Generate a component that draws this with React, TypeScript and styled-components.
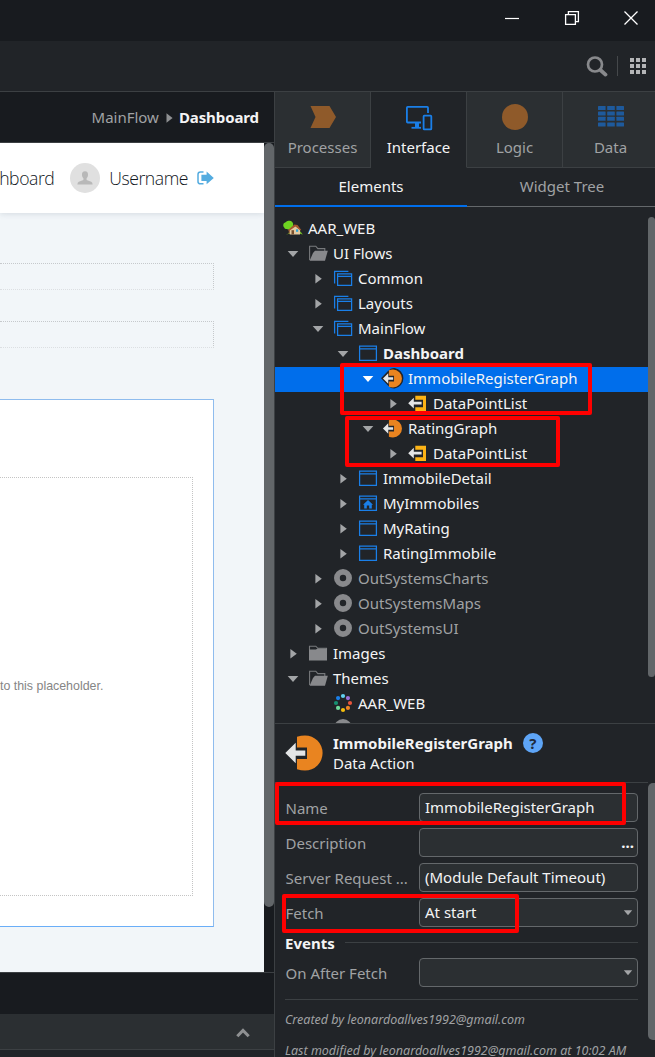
import React from "react";
import styled, { createGlobalStyle, css } from "styled-components";

const c = {
  title: "#181b1f",
  panel: "#212428",
  raised: "#2b2f32",
  line: "#3c4043",
  edge: "#64686b",
  text: "#f4f4f5",
  muted: "#a0a2a4",
  blue: "#006eeb",
  icon: "#1a7fe8",
  grey: "#88898c",
  orange: "#e98420",
  brown: "#8f5a2a",
  thumb: "#626669",
};

const Global = createGlobalStyle`
  *, *::before, *::after { box-sizing: border-box; }
  body { margin: 0; background: ${c.panel}; overflow: hidden; }
`;

const Window = styled.div`
  position: relative;
  width: 655px;
  height: 1057px;
  overflow: hidden;
  display: flex;
  flex-direction: column;
  background: ${c.panel};
  color: ${c.text};
  font: 15px/25px "Noto Sans", sans-serif;
  white-space: nowrap;
  svg { flex: none; }
`;

const TitleBar = styled.header`
  height: 41px;
  flex: none;
  background: ${c.title};
  display: flex;
  justify-content: flex-end;
  align-items: flex-start;
  gap: 43px;
  padding: 10px 16px 0 0;
`;

const Toolbar = styled.div`
  height: 51px;
  flex: none;
  border-bottom: 1px solid ${c.line};
  display: flex;
  justify-content: flex-end;
  align-items: center;
  padding-right: 9px;
`;

const Divider = styled.span`
  width: 1px;
  height: 20px;
  background: #45484b;
  margin: 0 12px 0 9px;
`;

const Body = styled.div`
  flex: 1;
  min-height: 0;
  display: flex;
`;

const Editor = styled.main`
  width: 275px;
  flex: none;
  border-right: 1px solid ${c.line};
  display: flex;
  flex-direction: column;
  background: ${c.title};
`;

const Breadcrumb = styled.nav`
  height: 51px;
  flex: none;
  border-bottom: 1px solid ${c.line};
  display: flex;
  align-items: center;
  justify-content: flex-end;
  padding: 1px 15px 0 0;
  color: ${c.muted};
  svg { margin: 1px 6px 0 7px; }
  b { color: ${c.text}; letter-spacing: -0.1px; }
`;

const Canvas = styled.div`
  height: 829px;
  flex: none;
  display: flex;
`;

const Preview = styled.div`
  width: 264px;
  overflow: hidden;
  background: #f2f6f9;
`;

const SiteBar = styled.div`
  height: 70px;
  background: #fff;
  box-shadow: 0 1px 6px rgba(60, 80, 100, 0.16);
  display: flex;
  align-items: center;
  justify-content: flex-end;
  padding-right: 50px;
  font: 300 17.6px/24px "Open Sans", sans-serif;
  letter-spacing: -0.45px;
  color: #10161c;
`;

const Avatar = styled.span`
  width: 30px;
  height: 30px;
  flex: none;
  border-radius: 50%;
  background: #e0e0e0;
  margin: 0 9px 0 16px;
  display: grid;
  place-items: center;
`;

const User = styled.span`
  margin-right: 9px;
`;

const Slot = styled.div`
  width: 214px;
  height: 27px;
  border: 1px dotted #c6c9cc;
  border-bottom-color: #dcdfe2;
  border-left: 0;
  margin-top: 50px;
  & + & { margin-top: 31px; }
`;

const Card = styled.div`
  width: 214px;
  height: 528px;
  margin-top: 51px;
  border: 1px solid #8fbcee;
  border-bottom-color: #6aaef8;
  border-left: 0;
  background: #fff;
  padding: 77px 20px 0 0;
`;

const Placeholder = styled.div`
  height: 419px;
  border: 1px dotted #c4c4c4;
  border-left: 0;
  display: flex;
  align-items: center;
  padding-bottom: 1px;
  font: 12.4px/16px "Liberation Sans", Arial, sans-serif;
  color: #858585;
`;

const Track = styled.div`
  width: 10px;
  background: ${c.title};
`;

const Thumb = styled.div<{ $h: number; $wide?: boolean }>`
  height: ${(p) => p.$h}px;
  width: ${(p) => (p.$wide ? 12 : 10)}px;
  border-radius: 5px;
  background: ${c.thumb};
`;

const Gap = styled.div`
  height: 42px;
  flex: none;
  border-top: 1px solid ${c.line};
`;

const Drawer = styled.div`
  height: 36px;
  flex: none;
  background: ${c.raised};
  border-bottom: 1px solid ${c.line};
  display: flex;
  justify-content: flex-end;
  padding: 14px 24px 0 0;
`;

const DrawerFoot = styled.div`
  flex: 1;
  background: ${c.panel};
`;

const Side = styled.aside`
  width: 380px;
  display: flex;
  flex-direction: column;
  overflow: hidden;
`;

const Layers = styled.div`
  flex: none;
  display: grid;
  grid-template-columns: repeat(4, 96px);
  height: 76px;
`;

const Layer = styled.div<{ $on?: boolean }>`
  border-right: 1px solid ${c.line};
  border-bottom: 1px solid ${(p) => (p.$on ? c.panel : c.line)};
  background: ${(p) => (p.$on ? c.panel : c.raised)};
  color: ${(p) => (p.$on ? c.text : c.muted)};
  display: flex;
  flex-direction: column;
  align-items: center;
  padding-top: 11px;
  svg { margin-bottom: 3px; }
`;

const SubTabs = styled.div`
  flex: none;
  display: grid;
  grid-template-columns: repeat(2, 192px);
  height: 39px;
`;

const SubTab = styled.div<{ $on?: boolean }>`
  text-align: center;
  padding-top: 6px;
  color: ${(p) => (p.$on ? c.text : c.muted)};
  ${(p) =>
    p.$on
      ? css`border-bottom: 2px solid ${c.blue};`
      : css`border-bottom: 1px solid ${c.edge}; padding-right: 2px;`}
`;

const TreePane = styled.section`
  flex: none;
  height: 516px;
  padding-top: 10px;
  display: flex;
  overflow: hidden;
`;

const Tree = styled.div`
  width: 373px;
  flex: none;
`;

const Row = styled.div<{ $level: number; $selected?: boolean; $bold?: boolean; $dim?: boolean }>`
  height: 25px;
  display: flex;
  padding-left: ${(p) => (p.$level ? p.$level * 25 - 15 : 9)}px;
  background: ${(p) => (p.$selected ? c.blue : "transparent")};
  font-weight: ${(p) => (p.$bold ? 700 : 400)};
  line-height: 23px;
  color: ${(p) => (p.$dim ? c.muted : c.text)};
`;

const RowIcon = styled.svg`
  width: 24px;
  height: 25px;
  overflow: visible;
`;

const Twisty = styled.svg`
  width: 16px;
  height: 25px;
  margin-right: 8px;
`;

const Head = styled.section`
  height: 59px;
  flex: none;
  border-top: 1px solid ${c.line};
  display: flex;
  padding: 10px 0 0 10px;
  line-height: 20px;
`;

const HeadText = styled.div`
  margin: -1px 0 0 10px;
`;

const HeadTitle = styled.div`
  display: flex;
  align-items: center;
  height: 20px;
  font-weight: 700;
`;

const Help = styled.span`
  width: 20px;
  height: 20px;
  border-radius: 50%;
  margin: 0 0 0 10px;
  background: #5ea5f7;
  color: #1e2a3a;
  text-align: center;
  line-height: 20px;
`;

const Props = styled.section`
  flex: 1;
  min-height: 0;
  display: flex;
`;

const Form = styled.div`
  width: 373px;
  flex: none;
  border-top: 1px solid ${c.line};
  padding: 10px 10px 0;
`;

const FormScroll = styled.div`
  padding-top: 1px;
`;

const Field = styled.div`
  display: flex;
  height: 29px;
  margin-bottom: 6px;
`;

const Label = styled.label`
  width: 134px;
  padding: 3px 0 0 0.5px;
  color: ${c.muted};
`;

const Input = styled.div`
  width: 219px;
  height: 29px;
  border: 1px solid ${c.edge};
  border-radius: 4px;
  background: ${c.raised};
  display: flex;
  align-items: center;
  justify-content: space-between;
  padding: 0 4px 0 5px;
  svg { margin-top: 1px; }
`;

const Dots = styled.b`
  margin-right: -1px;
`;

const Group = styled.div`
  display: flex;
  align-items: center;
  height: 25px;
  margin: -2px 0 2px;
  font-weight: 700;
  &::after {
    content: "";
    flex: 1;
    height: 1px;
    margin: 0 0 3px 10px;
    background: ${c.line};
  }
`;

const Meta = styled.div`
  margin-top: 12px;
  border-top: 1px solid ${c.line};
  padding-top: 4px;
  width: 353px;
  font-size: 12.5px;
  font-style: italic;
  line-height: 31px;
  color: ${c.muted};
`;

/* Callout frames that lie over the panels. */
const Mark = styled.div<{ $x: number; $y: number; $w: number; $h: number }>`
  position: absolute;
  left: ${(p) => p.$x}px;
  top: ${(p) => p.$y}px;
  width: ${(p) => p.$w}px;
  height: ${(p) => p.$h}px;
  border: 4px solid #fe0000;
  border-radius: 2px;
`;

type Kind = "home" | "open" | "folder" | "flow" | "screen" | "homeScreen" | "action" | "output" | "module" | "theme";

const ActionShape = () => (
  <>
    <path d="M12 1.8Q16 .4 20 .4A17.6 17.6 0 0 1 20 35.6Q16 35.6 12 34.2V24H22V12.5H12Z" fill={c.orange} />
    <path d="M.3 18 10.7 7.8V15.5H20.3V20.7H10.7V28.2Z" fill="#e4e5e6" />
  </>
);

const dots = ["#62d0f0", "#9b6fd8", "#e8553c", "#ee8424", "#f5bd0c", "#6fdc9c", "#168f70", "#1a7fe8"];

const icons: Record<Kind, React.ReactNode> = {
  home: (
    <>
      <path d="M5 12 4.5 17H6.5V12Z" fill="#8a5a2c" />
      <path d="M-.8 8Q-.8 5.6 1.6 5.2 3 3.2 5.6 3.8 8.6 4 9.2 7 9.6 10 7 11.6 5 13.4 3 12 .8 12.4 .2 10.4-.8 9.6-.8 8Z" fill="#6fd321" />
      <path d="M2 17.4Q8 14.5 18.8 17.4L16.5 14.5Z" fill="#76b82a" />
      <path d="M5.8 12 10.8 8.4 16 12.5V17.4H5.8Z" fill="#e3c9a0" />
      <path d="M4 13 10.4 7.4 13.5 8 17.3 13 16.4 13.6 11.5 9.4 5 13.9Z" fill="#a4582e" />
      <path d="M7.5 13.2H10V17.4H7.5Z" fill="#79502f" />
      <path d="M12 12.3H14.2V14.8H12Z" fill="#2fa5d8" />
    </>
  ),
  open: (
    <>
      <path d="M.6 18V4.2H6.8L8.8 6.6H15.8V9" fill="none" stroke="#77797c" strokeWidth="1.1" />
      <path d="M.6 18.7 4 11 6 8.8H18.8L16 18.7Z" fill={c.grey} />
    </>
  ),
  folder: (
    <>
      <path d="M.5 8V4.2H6.8L8.8 6.3H17.5V8" fill="none" stroke="#77797c" strokeWidth="1.1" />
      <path d="M0 18.5V7.6H7L8.6 6.4H18V18.5Z" fill={c.grey} />
    </>
  ),
  flow: (
    <g fill="none" stroke={c.icon} strokeWidth="1.25">
      <path d="M.6 16.6V4.3H14.4" />
      <path d="M3.6 6.8H17.6V18.3H3.6ZM3.6 9.4H17.6" />
    </g>
  ),
  screen: <path d="M.6 4H17.4V18.3H.6ZM.6 6.9H17.4" fill="none" stroke={c.icon} strokeWidth="1.25" />,
  homeScreen: (
    <>
      <path d="M.6 4H17.4V18.3H.6ZM.6 6.9H17.4" fill="none" stroke={c.icon} strokeWidth="1.25" />
      <path d="M9 8 14 12.7H12.8V16.6H10.2V13.6H7.8V16.6H5.2V12.7H4Z" fill={c.icon} />
    </>
  ),
  action: (
    <g transform="translate(-1.2 2.3) scale(.51)">
      <ActionShape />
    </g>
  ),
  output: (
    <>
      <path d="M6.3 3.8H17V19H6.3V15.2H14V7.8H6.3Z" fill="#fcb316" />
      <path d="M-.8 11.2 4.8 5.8V9.8H12.6V12.6H4.8V16.6Z" fill="#e4e5e6" />
    </>
  ),
  module: <circle cx="9" cy="11" r="6.1" fill="none" stroke={c.grey} strokeWidth="5.8" />,
  theme: (
    <>
      {dots.map((d, i) => (
        <circle key={d} cx={9 + 7 * Math.sin((i * Math.PI) / 4)} cy={11 - 7 * Math.cos((i * Math.PI) / 4)} r="2.1" fill={d} />
      ))}
    </>
  ),
};

type Item = { n: string; l: number; k: Kind; o?: boolean | null; sel?: boolean; bold?: boolean; dim?: boolean };

const items: Item[] = [
  { n: "AAR_WEB", l: 0, k: "home", o: null },
  { n: "UI Flows", l: 1, k: "open", o: true },
  { n: "Common", l: 2, k: "flow" },
  { n: "Layouts", l: 2, k: "flow" },
  { n: "MainFlow", l: 2, k: "flow", o: true },
  { n: "Dashboard", l: 3, k: "screen", o: true, bold: true },
  { n: "ImmobileRegisterGraph", l: 4, k: "action", o: true, sel: true },
  { n: "DataPointList", l: 5, k: "output" },
  { n: "RatingGraph", l: 4, k: "action", o: true },
  { n: "DataPointList", l: 5, k: "output" },
  { n: "ImmobileDetail", l: 3, k: "screen" },
  { n: "MyImmobiles", l: 3, k: "homeScreen" },
  { n: "MyRating", l: 3, k: "screen" },
  { n: "RatingImmobile", l: 3, k: "screen" },
  { n: "OutSystemsCharts", l: 2, k: "module", dim: true },
  { n: "OutSystemsMaps", l: 2, k: "module", dim: true },
  { n: "OutSystemsUI", l: 2, k: "module", dim: true },
  { n: "Images", l: 1, k: "folder" },
  { n: "Themes", l: 1, k: "open", o: true },
  { n: "AAR_WEB", l: 2, k: "theme", o: null },
  { n: "", l: 2, k: "module", o: null },
];

const TreeRow = ({ item }: { item: Item }) => (
  <Row $level={item.l} $selected={item.sel} $bold={item.bold} $dim={item.dim}>
    {item.l > 0 && (
      <Twisty viewBox="0 0 16 25">
        {item.o !== null && (
          <path d={item.o ? "M2.7 9H13.3L8 15Z" : "M5.4 7 11.8 11.7 5.4 16.4Z"} fill={item.sel ? "#fff" : "#a3a5a7"} />
        )}
      </Twisty>
    )}
    <RowIcon viewBox="0 0 24 25">
      {item.sel && (
        <path
          d="M-2 11.3 4.5 4.6Q7 1.5 10.5 1.8A9.6 9.6 0 0 1 10.5 20.8Q7 21 4.5 18Z"
          fill={c.panel}
          stroke={c.panel}
          strokeWidth="1.4"
        />
      )}
      {icons[item.k]}
    </RowIcon>
    <span>{item.n}</span>
  </Row>
);

const Caret = () => (
  <svg width="10" height="6" viewBox="0 0 10 6">
    <path d="M.8 .3H9.2L5 5.3Z" fill="#a3a5a7" />
  </svg>
);

export default function App() {
  return (
    <Window>
      <Global />
      <TitleBar>
        <svg width="16" height="16" viewBox="0 0 16 16"><path d="M0 8.5H14" stroke="#fff" strokeWidth="1.2" /></svg>
        <svg width="16" height="16" viewBox="0 0 16 16" fill="none" stroke="#fff" strokeWidth="1.3">
          <path d="M1.6 4.6H11.4V14.4H1.6ZM4.4 4.4V1.6H14.4V11.6H11.6" />
        </svg>
        <svg width="16" height="16" viewBox="0 0 16 16"><path d="M1.5 1.5 14.5 14.5M14.5 1.5 1.5 14.5" stroke="#fff" strokeWidth="1.3" /></svg>
      </TitleBar>
      <Toolbar>
        <svg width="22" height="21" viewBox="0 0 22 21" fill="none" stroke="#88898c">
          <circle cx="9" cy="8.5" r="7" strokeWidth="2.7" />
          <path d="M14.4 14 19.5 18.6" strokeWidth="3.8" strokeLinecap="round" />
        </svg>
        <Divider />
        <svg width="16" height="16" viewBox="0 0 16 16" fill="#b4b5b7">
          {[0, 6, 12].map((y) => [0, 6, 12].map((x) => <rect key={`${x}-${y}`} x={x} y={y} width="4" height="4" />))}
        </svg>
      </Toolbar>
      <Body>
        <Editor>
          <Breadcrumb>
            <span>MainFlow</span>
            <svg width="7" height="10" viewBox="0 0 7 10"><path d="M.5 .3 6.6 5 .5 9.7Z" fill="#8e9092" /></svg>
            <b>Dashboard</b>
          </Breadcrumb>
          <Canvas>
            <Preview>
              <SiteBar>
                <span>hboard</span>
                <Avatar>
                  <svg width="16" height="14" viewBox="0 0 16 14" fill="#b8b8b8">
                    <path d="M8 .3C10.2 .3 11.2 1.8 11 4 10.9 5.8 10.2 6.7 9.6 7.3V9L14.2 10.8Q15.6 11.4 15.6 13.6H.4Q.4 11.4 1.8 10.8L6.4 9V7.3C5.8 6.7 5.1 5.8 5 4 4.8 1.8 5.8 .3 8 .3Z" />
                  </svg>
                </Avatar>
                <User>Username</User>
                <svg width="17" height="14" viewBox="0 0 17 14">
                  <path d="M6.5 1H3.4Q1 1 1 3.4V10.4Q1 12.8 3.4 12.8H6.5" fill="none" stroke="#54ace0" strokeWidth="1.5" />
                  <path d="M4.4 3.8H9.6V.6L16.8 6.9 9.6 13.2V10H4.4Z" fill="#54ace0" />
                </svg>
              </SiteBar>
              <Slot />
              <Slot />
              <Card>
                <Placeholder>to this placeholder.</Placeholder>
              </Card>
            </Preview>
            <Track><Thumb $h={764} /></Track>
          </Canvas>
          <Gap />
          <Drawer>
            <svg width="14" height="10" viewBox="0 0 14 10"><path d="M1.3 8.2 7 2.4 12.7 8.2" fill="none" stroke="#8e9092" strokeWidth="3" /></svg>
          </Drawer>
          <DrawerFoot />
        </Editor>
        <Side>
          <Layers>
            <Layer>
              <svg width="26" height="29" viewBox="0 0 26 29"><path d="M.5 3H19.5L26 14 19.5 25H.5L5.5 14Z" fill={c.brown} /></svg>
              Processes
            </Layer>
            <Layer $on>
              <svg width="28" height="29" viewBox="0 0 28 29" fill="none" stroke={c.icon} strokeWidth="1.8">
                <path d="M23 10V4.7Q23 3.9 22.2 3.9H2.7Q1.9 3.9 1.9 4.7V18.7Q1.9 19.5 2.7 19.5H16" />
                <path d="M18.6 13.4Q18.6 12.7 19.3 12.7H25.6Q26.3 12.7 26.3 13.4V25.7Q26.3 26.4 25.6 26.4H19.3Q18.6 26.4 18.6 25.7Z" />
                <path d="M6.5 24.8H16" />
                <path d="M10 19.5H14V25H10Z" fill={c.icon} stroke="none" />
              </svg>
              Interface
            </Layer>
            <Layer>
              <svg width="26" height="29" viewBox="0 0 26 29"><circle cx="13" cy="14" r="13" fill={c.brown} /></svg>
              Logic
            </Layer>
            <Layer>
              <svg width="26" height="29" viewBox="0 0 26 29" fill="#1e5a9c">
                {[3, 8.4, 13.8, 19.6].map((y) => [0, 9.2, 18.4].map((x) => <rect key={`${x}-${y}`} x={x} y={y} width="7.6" height="4" rx=".5" />))}
              </svg>
              Data
            </Layer>
          </Layers>
          <SubTabs>
            <SubTab $on>Elements</SubTab>
            <SubTab>Widget Tree</SubTab>
          </SubTabs>
          <TreePane>
            <Tree>{items.map((it, i) => <TreeRow key={i} item={it} />)}</Tree>
            <Thumb $h={460} $wide />
          </TreePane>
          <Head>
            <svg width="38" height="37" viewBox="0 -1 38 37"><ActionShape /></svg>
            <HeadText>
              <HeadTitle>ImmobileRegisterGraph<Help>?</Help></HeadTitle>
              Data Action
            </HeadText>
          </Head>
          <Props>
            <Form>
              <Field><Label>Name</Label><Input>ImmobileRegisterGraph</Input></Field>
              <Field><Label>Description</Label><Input><span /><Dots>...</Dots></Input></Field>
              <Field><Label>Server Request ...</Label><Input>(Module Default Timeout)</Input></Field>
              <Field><Label>Fetch</Label><Input>At start<Caret /></Input></Field>
              <Group>Events</Group>
              <Field><Label>On After Fetch</Label><Input><span /><Caret /></Input></Field>
              <Meta>
                <div>Created by leonardoallves1992@gmail.com</div>
                <div>Last modified by leonardoallves1992@gmail.com at 10:02 AM</div>
              </Meta>
            </Form>
            <FormScroll><Thumb $h={257} $wide /></FormScroll>
          </Props>
        </Side>
      </Body>
      <Mark $x={340} $y={363} $w={252} $h={52} />
      <Mark $x={345} $y={416} $w={215} $h={51} />
      <Mark $x={275} $y={782} $w={351} $h={43} />
      <Mark $x={282} $y={894} $w={237} $h={39} />
    </Window>
  );
}
